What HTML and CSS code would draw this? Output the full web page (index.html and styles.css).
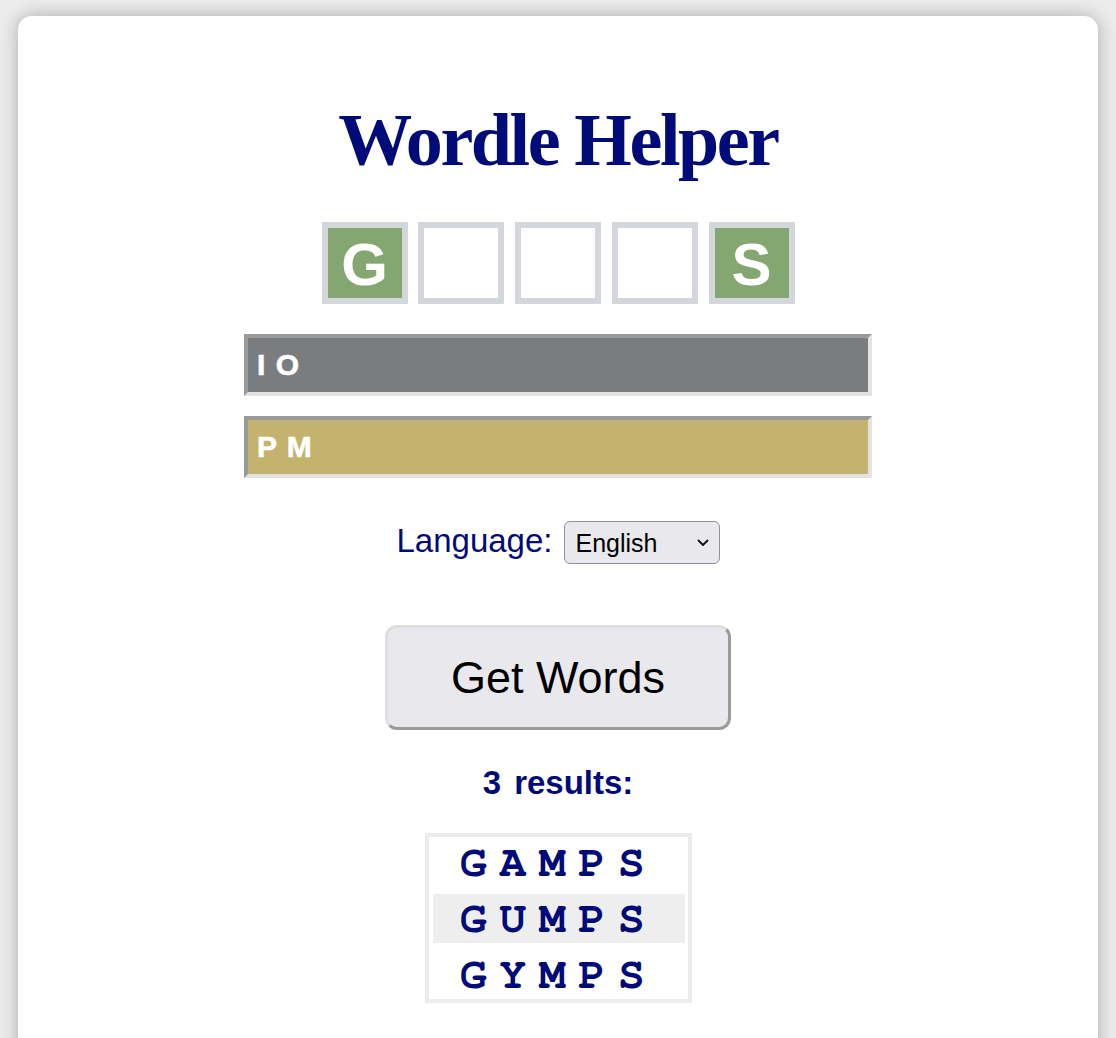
FILE: index.html
```html
<!DOCTYPE html>
<html lang="en">
<head>
<meta charset="utf-8">
<title>Wordle Helper</title>
<link rel="stylesheet" href="styles.css">
</head>
<body>
<main class="card">
  <h1 class="title">Wordle Helper</h1>
  <div class="tiles">
    <div class="tile tile-green">G</div>
    <div class="tile"></div>
    <div class="tile"></div>
    <div class="tile"></div>
    <div class="tile tile-green">S</div>
  </div>
  <div class="bar bar-gray">I O</div>
  <div class="bar bar-yellow">P M</div>
  <div class="lang">
    <label class="lang-label" for="lang">Language:</label>
    <span class="select-wrap">
      <select id="lang" class="select"><option>English</option></select>
      <svg class="chevron" width="12" height="8" viewBox="0 0 12 8"><path d="M1.5 1.5 L6 6 L10.5 1.5" fill="none" stroke="#111" stroke-width="1.8" stroke-linecap="round" stroke-linejoin="round"/></svg>
    </span>
  </div>
  <button class="get-btn" type="button">Get Words</button>
  <div class="results-count">3 results:</div>
  <div class="results">
    <div class="word">GAMPS</div>
    <div class="word word-alt">GUMPS</div>
    <div class="word">GYMPS</div>
  </div>
</main>
</body>
</html>
```
FILE: styles.css
```css
html, body {
  margin: 0;
  padding: 0;
}
body {
  background: #ececec;
  font-family: "Liberation Sans", Arial, sans-serif;
  padding: 16px 18px 0 18px;
  height: 1038px;
  box-sizing: border-box;
  overflow: hidden;
}
.card {
  background: #ffffff;
  border-radius: 14px;
  box-shadow: 0 0 18px rgba(0, 0, 0, 0.28);
  padding: 87px 0 80px;
  display: flex;
  flex-direction: column;
  align-items: center;
  min-height: 1100px;
  box-sizing: border-box;
}
.title {
  margin: 0;
  font-family: "Liberation Serif", "Times New Roman", serif;
  font-weight: 700;
  font-size: 74px;
  line-height: 74px;
  letter-spacing: -2.4px;
  color: #000b7a;
}
.tiles {
  margin-top: 45px;
  display: flex;
  gap: 10.75px;
}
.tile {
  width: 86px;
  height: 82px;
  box-sizing: border-box;
  border: 6px solid #d3d6da;
  background: #ffffff;
  display: flex;
  align-items: center;
  justify-content: center;
  padding-top: 3px;
  font-weight: 700;
  font-size: 60px;
  line-height: 1;
  color: #ffffff;
}
.tile-green {
  background: #84a670;
}
.bar {
  margin-top: 30px;
  width: 628px;
  height: 62px;
  box-sizing: border-box;
  border: 4px solid;
  border-color: #9a9a9a #e3e3e3 #e3e3e3 #9a9a9a;
  padding-left: 9px;
  display: flex;
  align-items: center;
  font-weight: 700;
  font-size: 30px;
  letter-spacing: 1px;
  color: #ffffff;
  -webkit-text-stroke: 0.6px #ffffff;
}
.bar + .bar {
  margin-top: 20px;
}
.bar-gray {
  background: #7a7d80;
}
.bar-yellow {
  background: #c4b36f;
}
.lang {
  margin-top: 43px;
  display: flex;
  align-items: baseline;
  gap: 11px;
}
.lang-label {
  font-size: 33px;
  color: #000b7a;
}
.select-wrap {
  position: relative;
  display: inline-block;
}
.select {
  -webkit-appearance: none;
  appearance: none;
  width: 156px;
  height: 43px;
  box-sizing: border-box;
  border: 1.5px solid #8f8f9d;
  border-radius: 6px;
  background: #e9e9ed;
  font-family: "Liberation Sans", Arial, sans-serif;
  font-size: 25px;
  color: #000;
  padding: 0 0 0 11px;
  margin: 0;
}
.chevron {
  position: absolute;
  right: 11px;
  top: 50%;
  margin-top: -4px;
  pointer-events: none;
}
.get-btn {
  margin-top: 61px;
  width: 346px;
  height: 105px;
  box-sizing: border-box;
  border: 3px solid;
  border-color: #dedede #9a9a9a #9a9a9a #dedede;
  border-radius: 12px;
  background: #e9e9ed;
  font-family: "Liberation Sans", Arial, sans-serif;
  font-size: 45px;
  color: #000;
  padding: 0;
}
.results-count {
  margin-top: 33px;
  font-weight: 700;
  font-size: 33px;
  line-height: 40px;
  word-spacing: 4px;
  color: #000b7a;
}
.results {
  margin-top: 30px;
  width: 267px;
  box-sizing: border-box;
  border: 4px solid #ececec;
  padding: 1px 3px 0 4px;
  display: flex;
  flex-direction: column;
  gap: 7px;
}
.word {
  height: 49px;
  line-height: 49px;
  font-family: "Nimbus Mono PS", "Nimbus Mono L", "FreeMono", "Courier New", "Liberation Mono", monospace;
  font-weight: 700;
  font-size: 45px;
  letter-spacing: 12.5px;
  text-align: center;
  color: #000b7a;
}
.word-alt {
  background: #eeeeee;
}
```
